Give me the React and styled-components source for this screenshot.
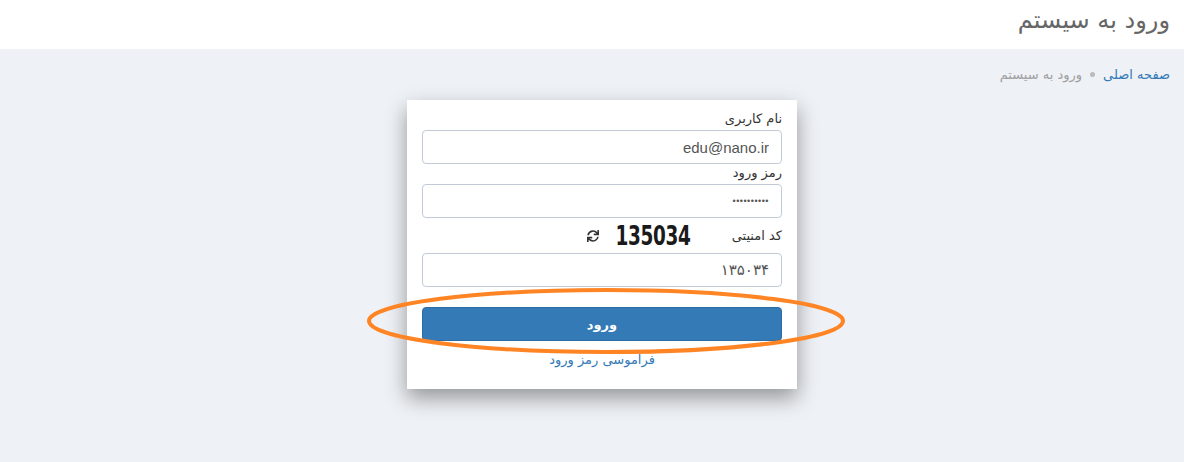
import React from "react";
import styled, { createGlobalStyle } from "styled-components";
import { FaSync } from "react-icons/fa";

const GlobalStyle = createGlobalStyle`
  html, body { margin: 0; padding: 0; }
  body {
    background: #eef1f5;
    font-family: "DejaVu Sans", "Noto Sans", sans-serif;
    direction: rtl;
  }
`;

const Page = styled.div`
  position: relative;
  width: 1184px;
  height: 462px;
  overflow: hidden;
`;

const Header = styled.header`
  height: 49px;
  background: #fff;
  display: flex;
  align-items: center;
  padding: 0 14px;
`;

const Title = styled.h1`
  margin: 0;
  font-size: 24px;
  font-weight: normal;
  color: #666;
  padding-bottom: 10px;
`;

const Breadcrumb = styled.div`
  display: flex;
  align-items: center;
  gap: 8px;
  padding: 17px 14px 0;
  font-size: 13px;
  height: 34px;
  box-sizing: border-box;
`;

const Crumb = styled.a`
  color: ${p => (p.$active ? "#337ab7" : "#a0a0a0")};
  text-decoration: none;
`;

const Dot = styled.span`
  width: 5px;
  height: 5px;
  border-radius: 50%;
  background: #bbb;
`;

const Center = styled.div`
  display: flex;
  justify-content: center;
  padding: 17px 0 0 20px;
`;

const Card = styled.div`
  width: 390px;
  box-sizing: border-box;
  background: #fff;
  padding: 10px 15px 20px;
  box-shadow: 0 9px 20px rgba(0, 0, 0, 0.38);
  display: flex;
  flex-direction: column;
`;

const Label = styled.label`
  font-size: 13px;
  color: #333;
  line-height: 18px;
  margin-bottom: 2px;
`;

const Input = styled.input`
  width: 100%;
  height: 34px;
  box-sizing: border-box;
  border: 1px solid #c2cad8;
  border-radius: 4px;
  padding: 0 12px;
  font-size: 15px;
  color: #555;
  font-family: ${p => (p.$latin ? '"Liberation Sans", Arial, sans-serif' : '"DejaVu Sans", sans-serif')};
  direction: ${p => (p.$latin ? "ltr" : "rtl")};
  text-align: right;
  margin-bottom: ${p => p.$mb ?? 0}px;
  outline: none;
`;

const Password = styled(Input)`
  font-size: 9px;
  letter-spacing: 0.5px;
`;

const CaptchaRow = styled.div`
  display: flex;
  align-items: center;
  height: 35px;
`;

const CaptchaLabel = styled(Label)`
  margin: 0;
  width: 92px;
`;

const CaptchaImage = styled.span`
  font-family: "DejaVu Sans Condensed", "DejaVu Sans", sans-serif;
  font-weight: bold;
  font-size: 27px;
  line-height: 30px;
  color: #1a1a1a;
  direction: ltr;
  letter-spacing: -0.5px;
  display: inline-block;
  transform: scaleX(0.76);
  transform-origin: right center;
  margin-left: -7px;
`;

const Refresh = styled.span`
  color: #333;
  font-size: 12px;
  display: flex;
`;

const Button = styled.button`
  margin-top: 20px;
  height: 34px;
  width: 100%;
  border: 1px solid #2e6da4;
  border-radius: 4px;
  background: #337ab7;
  color: #fff;
  font-family: "DejaVu Sans", sans-serif;
  font-weight: bold;
  font-size: 13px;
`;

const Forgot = styled.a`
  margin-top: 10px;
  text-align: center;
  color: #337ab7;
  font-size: 13px;
  line-height: 18px;
  text-decoration: none;
`;

const Annotation = styled.svg`
  position: absolute;
  left: 0;
  top: 0;
  pointer-events: none;
`;

export default function App() {
  return (
    <Page>
      <GlobalStyle />
      <Header>
        <Title>ورود به سیستم</Title>
      </Header>
      <Breadcrumb>
        <Crumb $active href="#">صفحه اصلی</Crumb>
        <Dot />
        <Crumb>ورود به سیستم</Crumb>
      </Breadcrumb>
      <Center>
        <Card>
          <Label>نام کاربری</Label>
          <Input $latin defaultValue="edu@nano.ir" />
          <Label>رمز ورود</Label>
          <Password $latin type="password" defaultValue="1234567890" />
          <CaptchaRow>
            <CaptchaLabel>کد امنیتی</CaptchaLabel>
            <CaptchaImage>135034</CaptchaImage>
            <Refresh><FaSync /></Refresh>
          </CaptchaRow>
          <Input defaultValue="۱۳۵۰۳۴" />
          <Button>ورود</Button>
          <Forgot href="#">فراموسی رمز ورود</Forgot>
        </Card>
      </Center>
      <Annotation width="1184" height="462">
        <ellipse cx="606" cy="321" rx="237" ry="31" fill="none" stroke="#ff8424" strokeWidth="4" />
      </Annotation>
    </Page>
  );
}
